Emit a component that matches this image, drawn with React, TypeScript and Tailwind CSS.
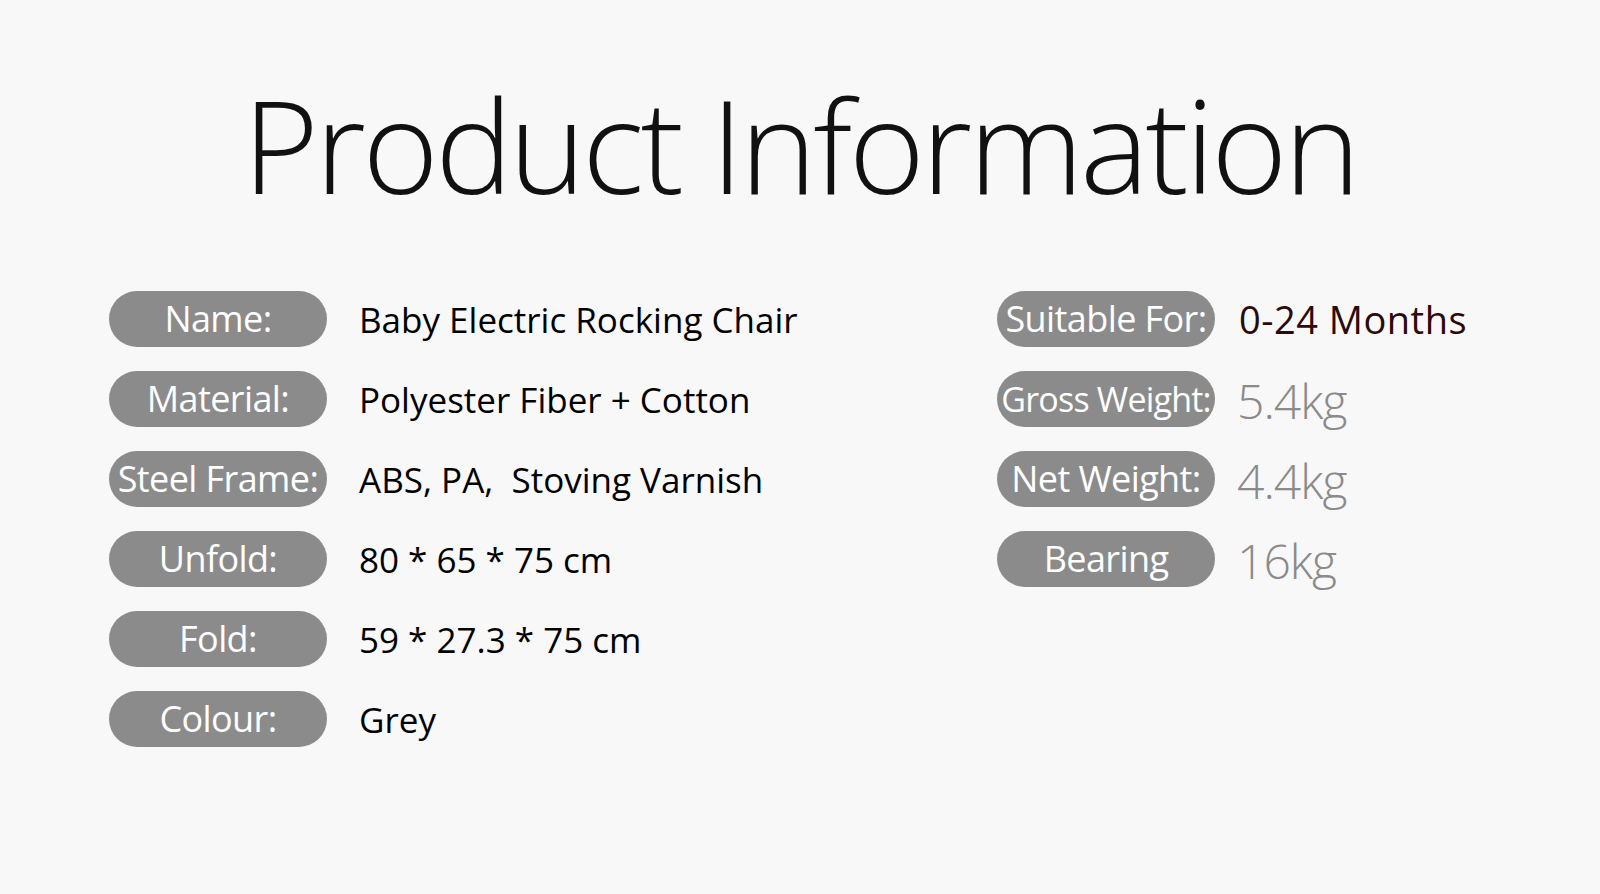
import React from "react";

const left: [string, string][] = [
  ["Name:", "Baby Electric Rocking Chair"],
  ["Material:", "Polyester Fiber + Cotton"],
  ["Steel Frame:", "ABS, PA,  Stoving Varnish"],
  ["Unfold:", "80 * 65 * 75 cm"],
  ["Fold:", "59 * 27.3 * 75 cm"],
  ["Colour:", "Grey"],
];

function Pill({ children, small }: { children: React.ReactNode; small?: boolean }) {
  return (
    <div
      className={
        small
          ? "flex h-[56px] w-[218px] shrink-0 items-center justify-center whitespace-nowrap rounded-full bg-[#8b8b8b] text-[34px] leading-none tracking-[-0.8px] text-white"
          : "flex h-[56px] w-[218px] shrink-0 items-center justify-center whitespace-nowrap rounded-full bg-[#8b8b8b] text-[36px] leading-none tracking-[-0.6px] text-white"
      }
    >
      {children}
    </div>
  );
}

export default function App() {
  return (
    <div
      className="flex h-[894px] w-[1600px] flex-col bg-[#f8f8f8] text-black"
      style={{ fontFamily: '"Open Sans", "Noto Sans", sans-serif' }}
    >
      <div className="flex h-[291px] justify-center pt-[64px]">
        <h1 className="whitespace-nowrap text-[130px] font-light leading-[160px] tracking-[-3.5px] text-[#111]">
          Product Information
        </h1>
      </div>
      <div className="flex pl-[109px]">
        <div className="flex w-[888px] flex-col gap-[24px]">
          {left.map(([k, v]) => (
            <div key={k} className="flex items-center gap-[32px]">
              <Pill>{k}</Pill>
              <span className="whitespace-pre text-[35px] leading-none">{v}</span>
            </div>
          ))}
        </div>
        <div className="flex flex-col gap-[24px]">
          <div className="flex items-center gap-[24px]">
            <Pill>Suitable For:</Pill>
            <span className="text-[38px] leading-none tracking-[0.5px] text-[#2b0a0a]">0-24 Months</span>
          </div>
          {[
            ["Gross Weight:", "5.4kg"],
            ["Net Weight:", "4.4kg"],
            ["Bearing", "16kg"],
          ].map(([k, v]) => (
            <div key={k} className="flex items-center gap-[22px]">
              <Pill small={k === "Gross Weight:"}>{k}</Pill>
              <span className="pt-[4px] text-[48px] font-light leading-none tracking-[-1px] text-[#8a8a8a]">{v}</span>
            </div>
          ))}
        </div>
      </div>
    </div>
  );
}
